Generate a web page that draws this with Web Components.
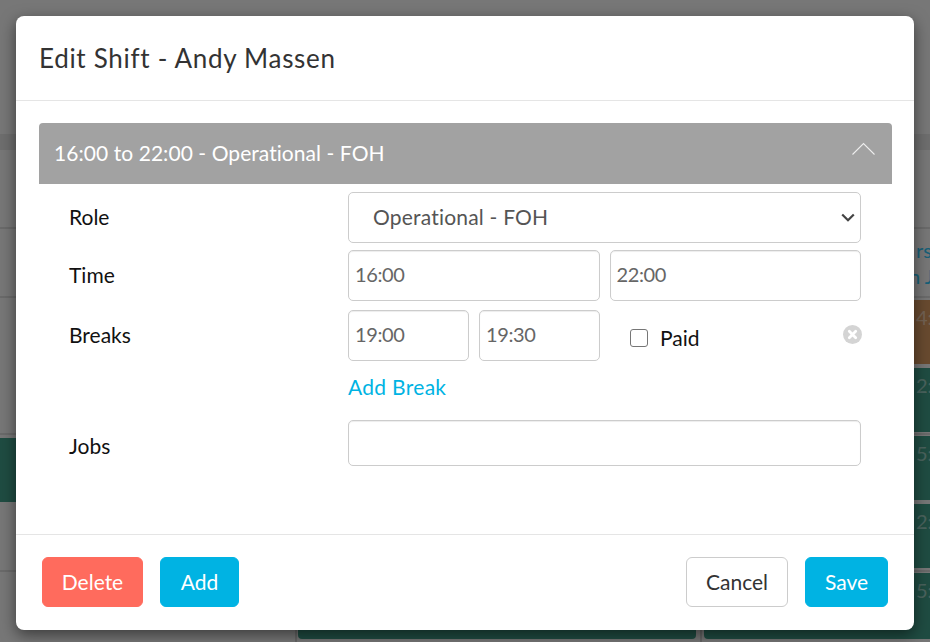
<!DOCTYPE html>
<html lang="en">
<head>
<meta charset="utf-8">
<title>Edit Shift</title>
<style>
html, body { margin: 0; height: 100%; overflow: hidden; }
body { font-family: Lato, "Open Sans", sans-serif; position: relative; background: #eee; }
</style>
</head>
<body>
<rota-board></rota-board>
<modal-layer>
	<shift-modal heading="Edit Shift - Andy Massen">
		<shift-panel heading="16:00 to 22:00 - Operational - FOH">
			<form-row label="Role" style="--after:7px;--lh:49px">
				<role-select value="Operational - FOH"></role-select>
			</form-row>
			<form-row label="Time" style="--after:9px">
				<text-field value="16:00" style="flex:1"></text-field>
				<text-field value="22:00" style="flex:1"></text-field>
			</form-row>
			<form-row label="Breaks">
				<text-field value="19:00" style="width:121px"></text-field>
				<text-field value="19:30" style="width:121px"></text-field>
				<paid-check></paid-check>
			</form-row>
			<add-link>Add Break</add-link>
			<form-row label="Jobs" style="--h:46px;--lh:51px">
				<text-field style="flex:1"></text-field>
			</form-row>
		</shift-panel>
		<app-button slot="left" kind="danger" style="--w:101px">Delete</app-button>
		<app-button slot="left" kind="primary" style="--w:79px">Add</app-button>
		<app-button slot="right" kind="plain" style="--w:102px">Cancel</app-button>
		<app-button slot="right" kind="primary" style="--w:83px">Save</app-button>
	</shift-modal>
</modal-layer>

<script>
// small helper, every element just sets its shadow html once
class Base extends HTMLElement {
	render(html) {
		this.attachShadow({mode: "open"}).innerHTML = html;
	}
}

customElements.define("rota-board", class extends Base {
	connectedCallback() {
		this.render(`
<style>
:host { display: block; height: 642px; background: #eee; font-size: 20px; overflow: hidden; }
.top { height: 134px; }
.band { height: 16px; background: #ddd; }
.row { display: grid; grid-template-columns: 295px 405px 240px; border-bottom: 2px solid #d4d4d4; box-sizing: border-box; }
.cell { display: flex; flex-direction: column; gap: 4px; padding: 1px 4px 0 1px; border-left: 2px solid #ccc; min-width: 0; }
.cell:first-child { border-left: 0; padding: 0; }
.cell.last { padding: 1px 0 0 2px; }
.card { height: 64px; flex: none; border-radius: 4px; color: rgba(255,255,255,.45); background: #3f9985; overflow: hidden; }
.card span { display: block; padding: 5px 0 0 212px; line-height: 24px; }
.brown { background: #d0945f; }
.cell.last.names { padding: 8px 0 0 2px; line-height: 26px; white-space: nowrap; color: #2fc0f0; gap: 0; }
.tall { height: 66px; }
.first { margin-top: 1px; }
</style>
<div class="top"></div>
<div class="band"></div>
<div class="row" style="height:79px"><div class="cell"></div><div class="cell"></div><div class="cell last"></div></div>
<div class="row" style="height:69px"><div class="cell"></div><div class="cell"></div>
	<div class="cell last names"><div style="padding-left:212px">rso</div><div style="padding-left:205px">n J</div></div></div>
<div class="row" style="height:137px"><div class="cell"></div><div class="cell"></div>
	<div class="cell last"><div class="card brown first"><span>4:</span></div><div class="card"><span>2:</span></div></div></div>
<div class="row" style="height:137px"><div class="cell"><div class="card" style="margin:3px 0 0 -6px"></div></div><div class="cell"></div>
	<div class="cell last"><div class="card"><span>5:</span></div><div class="card"><span>2:</span></div></div></div>
<div class="row" style="height:70px;border-bottom:0"><div class="cell"></div><div class="cell"><div class="card tall"></div></div>
	<div class="cell last"><div class="card tall"><span>5:</span></div></div></div>
`);
	}
});

customElements.define("modal-layer", class extends Base {
	connectedCallback() {
		this.render(`
<style>
:host { position: absolute; inset: 0; display: block; padding: 16px; box-sizing: border-box; background: rgba(0,0,0,.5); }
</style>
<slot></slot>`);
	}
});

customElements.define("shift-modal", class extends Base {
	connectedCallback() {
		this.render(`
<style>
:host { display: flex; flex-direction: column; width: 898px; height: 614px; background: #fff; border-radius: 8px; box-shadow: 0 5px 15px rgba(0,0,0,.5); }
header { height: 85px; flex: none; box-sizing: border-box; border-bottom: 1px solid #e5e5e5; padding: 24px 23px 0; font-size: 26px; line-height: 36px; letter-spacing: .7px; color: #333; }
main { flex: 1; padding: 22px 22px 0 23px; }
footer { height: 96px; flex: none; box-sizing: border-box; border-top: 1px solid #e5e5e5; padding: 22px 26px 0; display: flex; justify-content: space-between; }
.side { display: flex; gap: 17px; }
</style>
<header>${this.getAttribute("heading")}</header>
<main><slot></slot></main>
<footer>
	<div class="side"><slot name="left"></slot></div>
	<div class="side"><slot name="right"></slot></div>
</footer>`);
	}
});

customElements.define("shift-panel", class extends Base {
	connectedCallback() {
		this.render(`
<style>
:host { display: block; }
.head { height: 61px; box-sizing: border-box; display: flex; align-items: center; justify-content: space-between; background: #a2a2a2; color: #fff; font-size: 21px; letter-spacing: .06px; padding: 0 17px 3px 15px; border-radius: 4px 4px 0 0; }
svg { margin-top: -8px; }
.body { padding-top: 8px; }
</style>
<div class="head">
	<span>${this.getAttribute("heading")}</span>
	<svg width="23" height="13" viewBox="0 0 23 13"><path d="M.5 12.5 11.5 1.5 22.5 12.5" fill="none" stroke="#eee" stroke-width="1.1"/></svg>
</div>
<div class="body"><slot></slot></div>`);
	}
});

customElements.define("form-row", class extends Base {
	connectedCallback() {
		this.render(`
<style>
:host { display: flex; height: var(--h, 51px); margin-bottom: var(--after, 0); }
label { width: 279px; padding-left: 30px; flex: none; font-size: 21px; color: #111; line-height: var(--lh, 50px); box-sizing: content-box; }
.fields { width: 513px; display: flex; gap: 10px; }
</style>
<label>${this.getAttribute("label")}</label>
<div class="fields"><slot></slot></div>`);
	}
});

customElements.define("text-field", class extends Base {
	connectedCallback() {
		this.render(`
<style>
:host { display: block; }
input { box-sizing: border-box; width: 100%; height: 100%; border: 1px solid #ccc; border-radius: 5px; padding: 0 6px 3px; font: inherit; font-size: 20px; letter-spacing: -.4px; color: #666; background: #fff; box-shadow: inset 0 1px 1px rgba(0,0,0,.075); outline: none; }
</style>
<input type="text" value="${this.getAttribute("value") || ""}">`);
	}
});

customElements.define("role-select", class extends Base {
	connectedCallback() {
		this.render(`
<style>
:host { display: block; flex: 1; position: relative; }
select { appearance: none; box-sizing: border-box; width: 100%; height: 100%; border: 1px solid #ccc; border-radius: 5px; padding: 0 0 2px 24px; font: inherit; font-size: 21px; letter-spacing: .2px; color: #555; background: #fff; outline: none; }
svg { position: absolute; right: 6px; top: 21px; pointer-events: none; }
</style>
<select><option>${this.getAttribute("value")}</option></select>
<svg width="14" height="10" viewBox="0 0 14 10"><path d="M1.2 1.5 7 7.3 12.8 1.5" fill="none" stroke="#444" stroke-width="2.2"/></svg>`);
	}
});

customElements.define("paid-check", class extends Base {
	connectedCallback() {
		this.render(`
<style>
:host { display: flex; flex: 1; margin-left: 20px; align-items: flex-start; justify-content: space-between; }
label { display: flex; align-items: center; gap: 12px; font-size: 21px; color: #111; margin-top: 15px; height: 24px; }
input { appearance: none; width: 18px; height: 18px; margin: 2px 0 0; border: 1.5px solid #767676; border-radius: 3px; background: #fff; box-sizing: border-box; }
svg { margin: 15px -1px 0 0; }
</style>
<label><input type="checkbox">Paid</label>
<svg width="19" height="19" viewBox="0 0 19 19"><circle cx="9.5" cy="9.5" r="9.5" fill="#d4d4d4"/><path d="M6.3 6.3l6.4 6.4M12.7 6.3l-6.4 6.4" stroke="#fff" stroke-width="2.8" stroke-linecap="round"/></svg>`);
	}
});

customElements.define("add-link", class extends Base {
	connectedCallback() {
		this.render(`
<style>
:host { display: block; height: 59px; box-sizing: border-box; padding: 12px 0 0 309px; font-size: 21px; line-height: 28px; letter-spacing: .3px; color: #00b3e3; }
</style>
<slot></slot>`);
	}
});

customElements.define("app-button", class extends Base {
	connectedCallback() {
		let colours = {
			danger: "background:#ff6b5d;color:#fff;border-color:#ff6b5d",
			primary: "background:#00b3e3;color:#fff;border-color:#00b3e3",
			plain: "background:#fff;color:#333;border-color:#ccc",
		};
		this.render(`
<style>
:host { display: block; }
button { width: var(--w); height: 50px; padding: 0 0 2px; box-sizing: border-box; border: 1px solid; border-radius: 6px; font: inherit; font-size: 21px; ${colours[this.getAttribute("kind")]}; }
</style>
<button><slot></slot></button>`);
	}
});
</script>
</body>
</html>
